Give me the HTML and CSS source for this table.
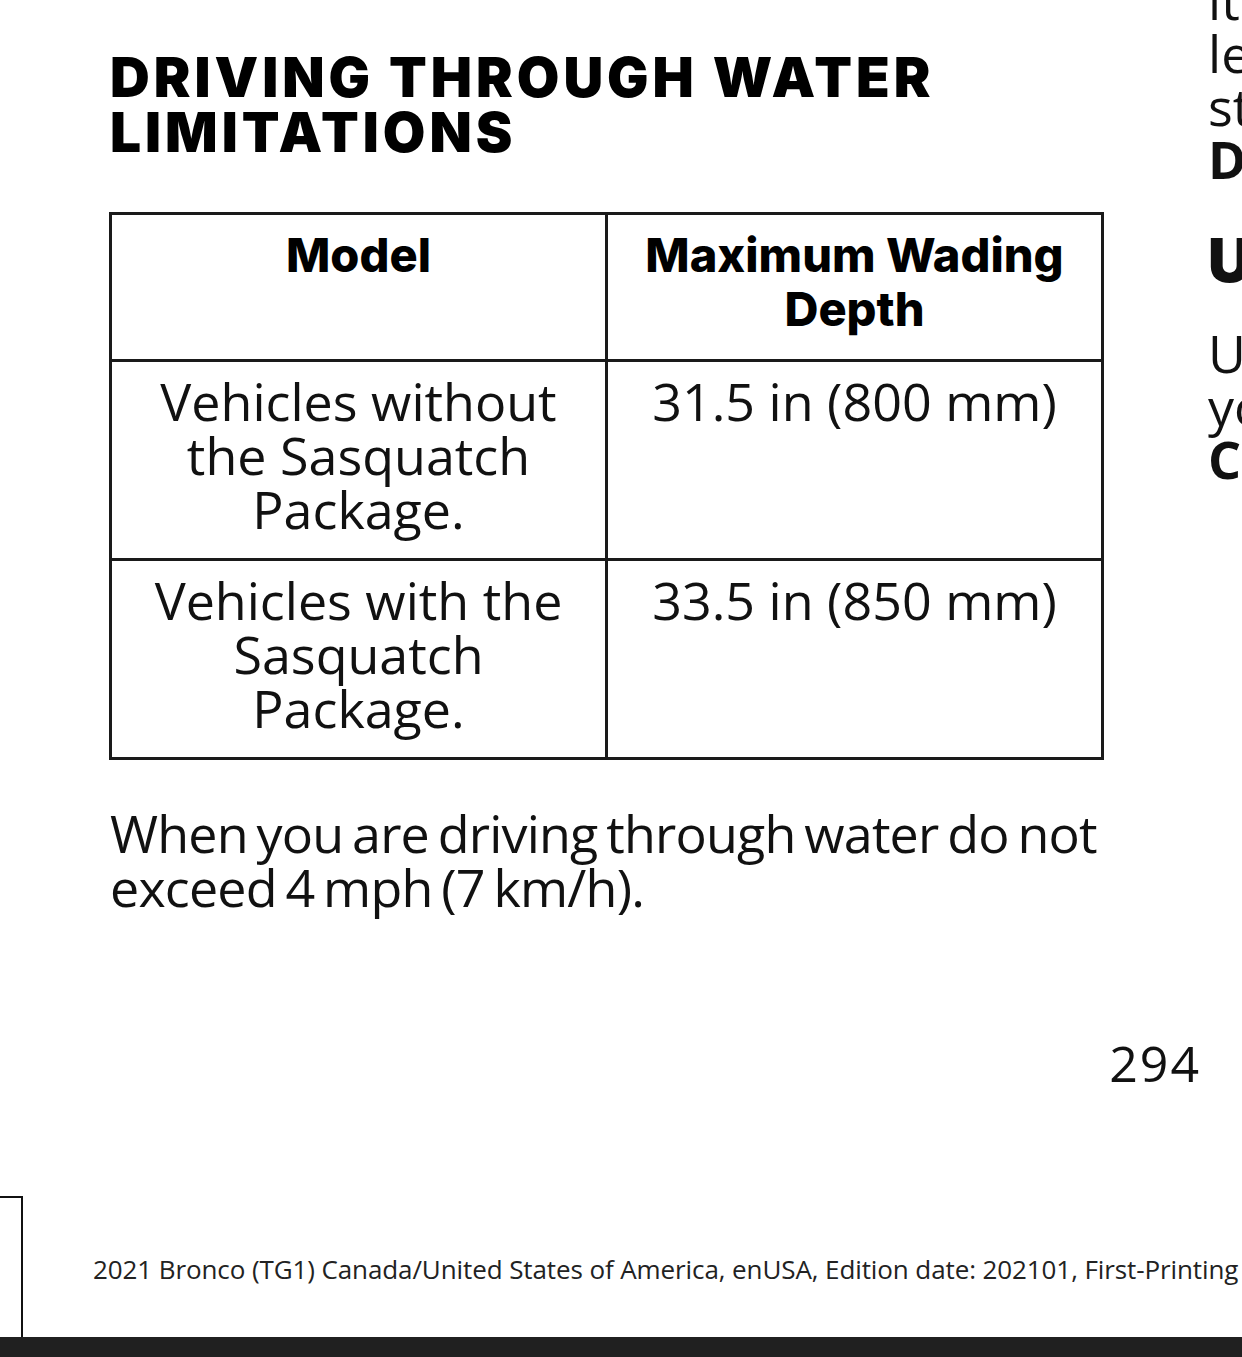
FILE: index.html
```html
<!DOCTYPE html>
<html>
<head>
<meta charset="utf-8">
<link rel="stylesheet" href="styles.css">
</head>
<body>
<div class="page">
  <main class="content">
    <h1 class="title">DRIVING THROUGH WATER<br>LIMITATIONS</h1>
    <table class="depth">
      <tr>
        <th>Model</th>
        <th>Maximum Wading<br>Depth</th>
      </tr>
      <tr>
        <td>Vehicles without<br>the Sasquatch<br>Package.</td>
        <td>31.5 in (800 mm)</td>
      </tr>
      <tr>
        <td>Vehicles with the<br>Sasquatch<br>Package.</td>
        <td>33.5 in (850 mm)</td>
      </tr>
    </table>
    <p class="note">When you are driving through water do not<br>exceed 4 mph (7 km/h).</p>
    <div class="pagenum">294</div>
  </main>
  <aside class="next">
    <div class="nl l1">it</div>
    <div class="nl">le</div>
    <div class="nl">st</div>
    <div class="nl b">D</div>
    <div class="nl h">U</div>
    <div class="nl u2">U</div>
    <div class="nl">yo</div>
    <div class="nl b">C</div>
  </aside>
</div>
<footer class="foot">
  <div class="prevpage"></div>
  <div class="foottext">2021 Bronco (TG1) Canada/United States of America, enUSA, Edition date: 202101, First-Printing</div>
</footer>
<div class="bar"></div>
</body>
</html>
```
FILE: styles.css
```css
html, body { margin: 0; padding: 0; background: #fff; }
body { width: 1242px; height: 1357px; overflow: hidden; font-family: "Open Sans", sans-serif; color: #111; }
.page { display: flex; height: 1196px; overflow: hidden; }
.content { width: 1091px; padding-left: 110px; flex: none; }
.title { margin: 0; padding-top: 50px; font-family: Inter, sans-serif; font-weight: 900; font-size: 55px; line-height: 55px; letter-spacing: 4px; color: #000; white-space: nowrap; }
.depth { margin-top: 52px; margin-left: -1px; border-collapse: collapse; width: 995px; table-layout: fixed; }
.depth th, .depth td { border: 3px solid #1a1a1a; text-align: center; vertical-align: top; width: 50%; white-space: nowrap; }
.depth th { font-family: Inter, sans-serif; font-weight: 800; font-size: 47px; line-height: 54px; padding: 13px 0 23px; color: #000; }
.depth td { font-weight: 400; font-size: 52px; line-height: 54px; padding: 12px 0 22px; }
.note { margin: 46px 0 0; font-size: 52px; line-height: 54px; letter-spacing: -0.8px; word-spacing: -4px; white-space: nowrap; }
.pagenum { margin-top: 122px; text-align: right; font-size: 50px; line-height: 54px; letter-spacing: 2px; }
.next { flex: 1; padding-left: 7px; overflow: hidden; }
.nl { font-size: 52px; line-height: 53px; white-space: nowrap; }
.l1 { margin-top: -27px; }
.b { font-weight: 700; }
.h { font-family: Inter, sans-serif; font-weight: 900; font-size: 60px; line-height: 60px; margin-top: 45px; }
.u2 { margin-top: 36px; }
.foot { height: 141px; display: flex; align-items: center; }
.prevpage { width: 23px; height: 141px; border-top: 2px solid #111; border-right: 2px solid #111; box-sizing: border-box; flex: none; }
.foottext { margin-left: 70px; font-size: 26px; letter-spacing: -0.1px; color: #222; white-space: nowrap; padding-top: 4px; }
.bar { height: 20px; background: #202020; }
```
